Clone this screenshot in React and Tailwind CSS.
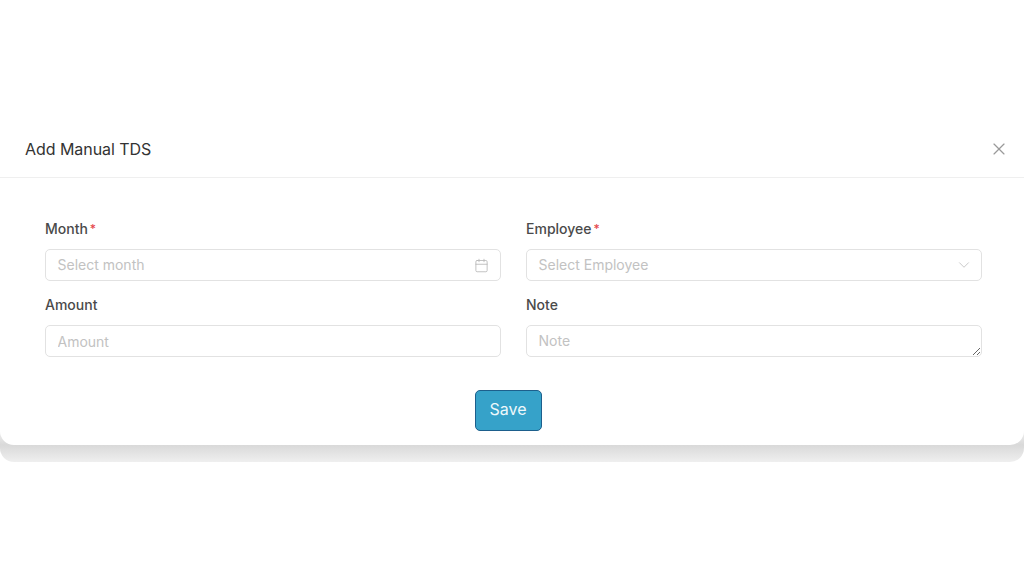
import React from "react";
import { Calendar, ChevronDown, X } from "lucide-react";

const inputClass =
  "h-8 w-full rounded-[5px] border border-[#e2e2e2] bg-white pl-[11.5px] pr-3 text-sm text-[#333] outline-none placeholder:text-[#c2c2c2]";

const Field = ({ label, required, children }) => (
  <div className="flex flex-col">
    <label className="mb-[10px] flex h-[20px] items-center text-sm font-medium leading-5 text-[#4a4a4a]">
      {label}
      {required && <span className="ml-[2px] text-xs text-[#e5484d]">*</span>}
    </label>
    {children}
  </div>
);

const App = () => {
  return (
    <div className="h-[585px] w-[1024px] overflow-hidden bg-white pt-[121px] font-['Inter',sans-serif]">
      <div className="rounded-b-[14px] bg-[linear-gradient(to_bottom,#ffffff_300px,#d9d9d9_324px,#efefef_341px)] pb-[17px]">
        <div className="h-[324px] rounded-b-[14px] bg-white">
          <div className="flex h-[57px] items-center justify-between border-b border-[#efefef] pb-[1px] pl-[25px] pr-[15px]">
            <h2 className="text-base font-normal tracking-[-0.05px] text-[#333]">Add Manual TDS</h2>
            <button className="text-[#9a9a9a]">
              <X size={20} strokeWidth={1.4} />
            </button>
          </div>
          <form className="pl-[45px] pr-[42px] pt-[41px]" onSubmit={(e) => e.preventDefault()}>
            <div className="grid grid-cols-2 gap-x-[25px] gap-y-[14px]">
              <Field label="Month" required>
                <div className="flex h-8 items-center justify-between rounded-[5px] border border-[#e2e2e2] pl-[11.5px] pr-[11px]">
                  <span className="text-sm text-[#c2c2c2]">Select month</span>
                  <Calendar size={15} strokeWidth={1.3} className="text-[#b5b5b5]" />
                </div>
              </Field>
              <Field label="Employee" required>
                <div className="flex h-8 items-center justify-between rounded-[5px] border border-[#e2e2e2] pl-[11.5px] pr-2">
                  <span className="text-sm text-[#c2c2c2]">Select Employee</span>
                  <ChevronDown size={18} strokeWidth={1.2} className="text-[#c4c4c4]" />
                </div>
              </Field>
              <Field label="Amount">
                <input className={inputClass} placeholder="Amount" />
              </Field>
              <Field label="Note">
                <textarea className={`${inputClass} block resize-y py-[5px] leading-5`} placeholder="Note" />
              </Field>
            </div>
            <div className="mt-[33px] flex justify-center pr-[11px]">
              <button
                type="submit"
                className="h-[41px] w-[67px] rounded-[5px] border border-[#1d5f8c] bg-[#36a2c9] pb-[3px] text-base text-[#eef8fb]"
              >
                Save
              </button>
            </div>
          </form>
        </div>
      </div>
    </div>
  );
};

export default App;
